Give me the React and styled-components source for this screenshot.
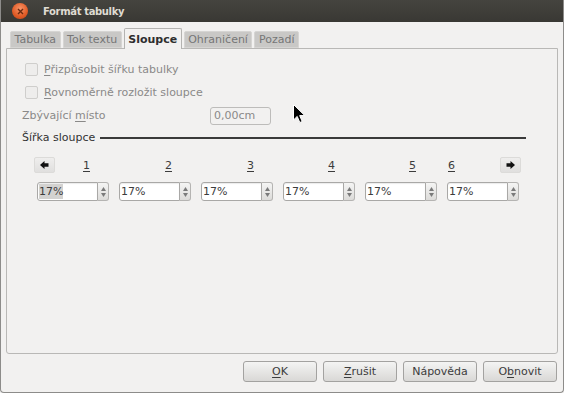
import React from "react";
import styled, { createGlobalStyle } from "styled-components";

const GlobalStyle = createGlobalStyle`
  body {
    margin: 0;
    background: #f2f1f0;
    font-family: "DejaVu Sans", "Noto Sans", sans-serif;
  }
`;

const Window = styled.div`
  position: relative;
  box-sizing: border-box;
  width: 564px;
  height: 393px;
  display: flex;
  flex-direction: column;
  background: #f2f1f0;
  border: 1px solid #8d8c8a;
  border-top: none;
  border-radius: 0 0 4px 4px;
  overflow: hidden;
`;

const TitleBar = styled.div`
  height: 22px;
  flex: none;
  display: flex;
  align-items: center;
  margin: 0 -1px;
  padding-left: 12px;
  background: linear-gradient(#45443f, #393834);
  color: #dfdbd2;
  font-weight: bold;
  font-size: 10px;
  letter-spacing: -0.35px;
`;

const CloseButton = styled.div`
  width: 16px;
  height: 16px;
  border-radius: 50%;
  margin-right: 15px;
  background: radial-gradient(circle at 50% 35%, #f79468, #e05a25 60%, #b8431a);
  display: flex;
  align-items: center;
  justify-content: center;
`;

const Body = styled.div`
  flex: 1;
  display: flex;
  flex-direction: column;
  padding: 6px 5px 10px;
  min-height: 0;
`;

const TabBar = styled.div`
  height: 20px;
  display: flex;
  align-items: flex-end;
  gap: 2px;
  padding-left: 4px;
  position: relative;
  z-index: 1;
`;

const Tab = styled.div`
  box-sizing: border-box;
  height: ${(p) => (p.active ? "21px" : "17px")};
  margin-bottom: ${(p) => (p.active ? "-1px" : "0")};
  padding: 0 3.5px;
  display: flex;
  align-items: center;
  font-size: 11px;
  font-weight: ${(p) => (p.active ? "bold" : "normal")};
  color: ${(p) => (p.active ? "#2e2e2e" : "#767676")};
  background: ${(p) => (p.active ? "#f2f1f0" : "#c9c8c6")};
  border: 1px solid ${(p) => (p.active ? "#b4b3b1" : "#d6d5d3")};
  border-bottom: ${(p) => (p.active ? "none" : "1px solid #d6d5d3")};
  border-radius: 2px 2px 0 0;
`;

const Panel = styled.div`
  flex: 1;
  box-sizing: border-box;
  border: 1px solid #b9b8b6;
  border-radius: 0 0 3px 3px;
  padding: 9px 31px 0 15px;
  display: flex;
  flex-direction: column;
  position: relative;
`;

const Row = styled.div`
  height: 23px;
  display: flex;
  align-items: center;
  font-size: 11px;
  color: ${(p) => (p.disabled ? "#8a8988" : "#3c3c3c")};
`;

const CheckRow = styled(Row)`
  padding-left: 3px;
  gap: 6px;
`;

const CheckBox = styled.span`
  box-sizing: border-box;
  width: 13px;
  height: 13px;
  border: 1px solid #cfcecc;
  border-radius: 2px;
  background: #eeedec;
`;

const Key = styled.span`
  text-decoration: underline;
  text-underline-offset: 2px;
`;

const RemainLabel = styled.span`
  width: 188px;
`;

const DisabledInput = styled.div`
  box-sizing: border-box;
  width: 61px;
  height: 18px;
  border: 1px solid #bdbcba;
  border-radius: 3px;
  padding-left: 3px;
  display: flex;
  align-items: center;
  color: #8a8988;
  background: #f2f1f0;
`;

const Heading = styled.div`
  height: 21px;
  display: flex;
  align-items: center;
  gap: 5px;
  font-size: 11px;
  color: #333;
`;

const Rule = styled.div`
  flex: 1;
  height: 2px;
  background: #3a3a3a;
`;

const ArrowRow = styled.div`
  display: flex;
  align-items: center;
  height: 16px;
  margin-top: 9px;
  padding-left: 12px;
  font-size: 11px;
  color: #3c3c3c;
`;

const ArrowButton = styled.div`
  box-sizing: border-box;
  width: 21px;
  height: 16px;
  flex: none;
  border: 1px solid #dcdbd9;
  border-radius: 2px;
  background: linear-gradient(#efeeed, #e0dfde);
  display: flex;
  align-items: center;
  justify-content: center;
`;

const ColLabel = styled.div`
  box-sizing: border-box;
  width: ${(p) => p.w}px;
  padding-left: ${(p) => p.pad || 0}px;
  flex: none;
`;

const SpinRow = styled.div`
  display: flex;
  gap: 10px;
  margin-top: 9px;
  padding-left: 15px;
`;

const Spin = styled.div`
  display: flex;
  height: 19px;
`;

const SpinInput = styled.div`
  box-sizing: border-box;
  width: 61px;
  height: 19px;
  border: 1px solid #a9a8a6;
  border-radius: 3px 0 0 3px;
  background: #fff;
  padding-left: 1px;
  display: flex;
  align-items: center;
  font-size: 11px;
  color: #3c3c3c;
  box-shadow: inset 0 1px 1px rgba(0, 0, 0, 0.08);
`;

const Selected = styled.span`
  background: #d3d2d0;
  padding: 1px 0;
`;

const SpinButtons = styled.div`
  box-sizing: border-box;
  width: 11px;
  height: 19px;
  border: 1px solid #b5b4b2;
  border-left: none;
  border-radius: 0 3px 3px 0;
  background: linear-gradient(#f5f5f4, #dcdbd9);
  display: flex;
  flex-direction: column;
  align-items: center;
  justify-content: center;
  gap: 2px;
`;

const Cursor = styled.svg`
  position: absolute;
  left: 286px;
  top: 55px;
`;

const ButtonRow = styled.div`
  display: flex;
  justify-content: flex-end;
  gap: 6px;
  margin-top: 7px;
  padding-right: 1px;
`;

const Button = styled.div`
  box-sizing: border-box;
  width: 74px;
  height: 21px;
  border: 1px solid #a3a2a0;
  border-radius: 3px;
  background: linear-gradient(#f4f4f3, #d9d8d6);
  display: flex;
  align-items: center;
  justify-content: center;
  font-size: 11px;
  color: #3c3c3c;
`;

const LeftArrow = () => (
  <svg width="9" height="8" viewBox="0 0 9 8">
    <path d="M0 4 L4.5 0 L4.5 2.2 L8.5 2.2 L8.5 5.8 L4.5 5.8 L4.5 8 Z" fill="#111" />
  </svg>
);

const RightArrow = () => (
  <svg width="9" height="8" viewBox="0 0 9 8">
    <path d="M9 4 L4.5 0 L4.5 2.2 L0.5 2.2 L0.5 5.8 L4.5 5.8 L4.5 8 Z" fill="#111" />
  </svg>
);

const SpinField = ({ selected }) => (
  <Spin>
    <SpinInput>{selected ? <Selected>17%</Selected> : "17%"}</SpinInput>
    <SpinButtons>
      <svg width="5" height="4" viewBox="0 0 5 4">
        <path d="M2.5 0 L5 4 L0 4 Z" fill="#7a7a7a" />
      </svg>
      <svg width="5" height="4" viewBox="0 0 5 4">
        <path d="M0 0 L5 0 L2.5 4 Z" fill="#7a7a7a" />
      </svg>
    </SpinButtons>
  </Spin>
);

// column label widths, taken from where each number sits over its spin field
const columns = [
  { n: "1", w: 110, pad: 28 },
  { n: "2", w: 82 },
  { n: "3", w: 81 },
  { n: "4", w: 81 },
  { n: "5", w: 39 },
  { n: "6", w: 52 },
];

export default function App() {
  return (
    <Window>
      <GlobalStyle />
      <TitleBar>
        <CloseButton>
          <svg width="7" height="7" viewBox="0 0 7 7">
            <path d="M1 1 L6 6 M6 1 L1 6" stroke="#6b2a10" strokeWidth="1.4" />
          </svg>
        </CloseButton>
        Formát tabulky
      </TitleBar>
      <Body>
        <TabBar>
          <Tab>Tabulka</Tab>
          <Tab>Tok textu</Tab>
          <Tab active>Sloupce</Tab>
          <Tab>Ohraničení</Tab>
          <Tab>Pozadí</Tab>
        </TabBar>
        <Panel>
          <CheckRow disabled>
            <CheckBox />
            <span>
              <Key>P</Key>řizpůsobit šířku tabulky
            </span>
          </CheckRow>
          <CheckRow disabled>
            <CheckBox />
            <span>
              <Key>R</Key>ovnoměrně rozložit sloupce
            </span>
          </CheckRow>
          <Row disabled>
            <RemainLabel>
              Zbývající <Key>m</Key>ísto
            </RemainLabel>
            <DisabledInput>0,00cm</DisabledInput>
          </Row>
          <Heading>
            Šířka sloupce
            <Rule />
          </Heading>
          <ArrowRow>
            <ArrowButton>
              <LeftArrow />
            </ArrowButton>
            {columns.map((c) => (
              <ColLabel key={c.n} w={c.w} pad={c.pad}>
                <Key>{c.n}</Key>
              </ColLabel>
            ))}
            <ArrowButton>
              <RightArrow />
            </ArrowButton>
          </ArrowRow>
          <SpinRow>
            {columns.map((c, i) => (
              <SpinField key={c.n} selected={i === 0} />
            ))}
          </SpinRow>
          <Cursor width="13" height="20" viewBox="0 0 13 20">
            <path
              d="M0.5 0.5 L0.5 16 L4.2 12.4 L6.8 18.5 L9.2 17.5 L6.7 11.6 L11.8 11.6 Z"
              fill="#000"
              stroke="#fff"
              strokeWidth="1"
            />
          </Cursor>
        </Panel>
        <ButtonRow>
          <Button>
            <span>
              <Key>O</Key>K
            </span>
          </Button>
          <Button>
            <span>
              <Key>Z</Key>rušit
            </span>
          </Button>
          <Button>Nápověda</Button>
          <Button>
            <span>
              O<Key>b</Key>novit
            </span>
          </Button>
        </ButtonRow>
      </Body>
    </Window>
  );
}
